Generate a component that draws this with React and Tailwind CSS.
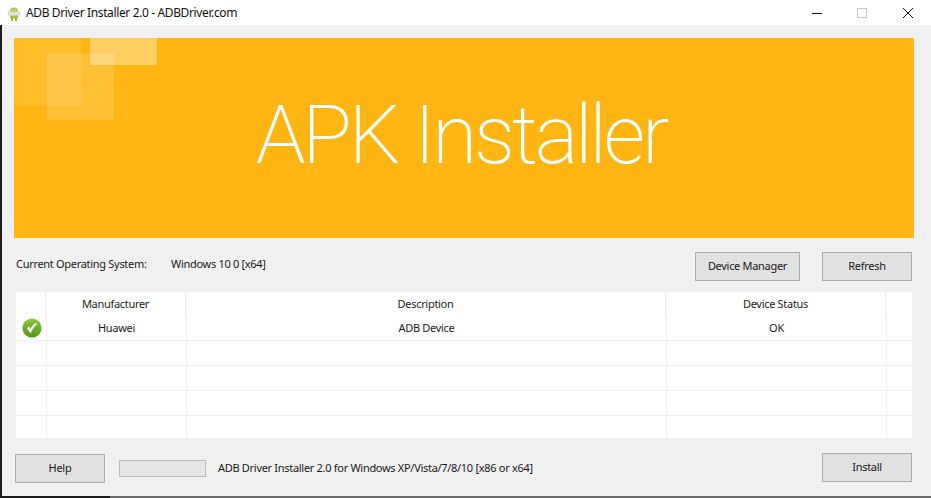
const ui = "font-['Noto_Sans','Open_Sans',sans-serif] text-[11px] tracking-[-0.3px] text-[#1a1a1a]";

function AndroidIcon() {
  return (
    <svg width="16" height="16" viewBox="0 0 16 16" className="shrink-0">
      <path d="M4 6.5a4 4 0 0 1 8 0z" fill="#a4c639" />
      <rect x="4" y="10.5" width="8" height="3" rx="1" fill="#a4c639" />
      <rect x="5" y="12.5" width="2" height="3.5" rx="1" fill="#8fae2f" />
      <rect x="9" y="12.5" width="2" height="3.5" rx="1" fill="#8fae2f" />
      <rect x="2" y="6.8" width="12" height="3.6" rx="1.6" fill="#e6e6dc" stroke="#b5b5a5" strokeWidth="0.5" />
      <circle cx="6.5" cy="4.6" r="0.6" fill="#fff" />
      <circle cx="9.5" cy="4.6" r="0.6" fill="#fff" />
    </svg>
  );
}

function CheckIcon() {
  return (
    <svg width="20" height="20" viewBox="0 0 20 20" className="translate-x-px">
      <defs>
        <linearGradient id="g" x1="0" y1="0" x2="0" y2="1">
          <stop offset="0" stopColor="#8cc63f" />
          <stop offset="1" stopColor="#4c9a12" />
        </linearGradient>
      </defs>
      <circle cx="10" cy="10" r="9.6" fill="url(#g)" />
      <path d="M4.8 10.2l3.8 5c1.6-3.8 3.6-6.4 6.6-9.2-.4-.5-1.4-.9-2.2-.8-2 1.6-3.3 3.4-4.5 5.6L7.2 8.4z" fill="#fff" />
    </svg>
  );
}

function Btn({ className, children }) {
  return (
    <div className={`flex h-[29px] items-center justify-center border border-[#adadad] bg-[#e1e1e1] ${className}`}>
      {children}
    </div>
  );
}

function Row({ cells, last }) {
  return (
    <div className={`grid grid-cols-[31px_140px_480px_220px_25px] items-center ${last ? "h-[22px]" : "h-[25px] border-b border-[#f0f0f0]"}`}>
      {cells.map((c, i) => (
        <div key={i} className={`flex h-full items-center justify-center ${i < 4 ? "border-r border-[#f0f0f0]" : ""}`}>
          {c}
        </div>
      ))}
    </div>
  );
}

export default function App() {
  return (
    <div className={`flex h-[498px] w-[931px] flex-col overflow-hidden bg-white ${ui}`}>
      <div className="flex h-[25px] shrink-0 items-center bg-white pl-[6px]">
        <AndroidIcon />
        <span className="ml-[4px] text-[12px] tracking-[-0.37px] text-[#111]">ADB Driver Installer 2.0 - ADBDriver.com</span>
        <div className="ml-auto flex items-center">
          <svg width="12" height="12" viewBox="0 0 12 12" className="mr-[33px]"><path d="M1 6.5h10" stroke="#111" strokeWidth="1" /></svg>
          <svg width="12" height="12" viewBox="0 0 12 12" className="mr-[34px]"><rect x="1.5" y="1.5" width="9" height="9" fill="none" stroke="#c8c8c8" /></svg>
          <svg width="12" height="12" viewBox="0 0 12 12" className="mr-[17px]"><path d="M1 1l10 10M11 1L1 11" stroke="#111" strokeWidth="1" /></svg>
        </div>
      </div>

      <div className="flex min-h-0 flex-1">
        <div className="w-[2px] shrink-0 bg-[#1c1c1c]" />
        <div className="min-w-0 flex-1 bg-[#f0f0f0] pt-[13px]">
          <div className="relative ml-[12px] flex h-[200px] w-[900px] items-center justify-center overflow-hidden bg-[#ffb612]">
            <div className="absolute left-0 top-0 h-[67px] w-[67px] bg-white/10" />
            <div className="absolute left-[33px] top-[15px] h-[67px] w-[67px] bg-white/15" />
            <div className="absolute left-[76px] top-0 h-[27px] w-[67px] bg-white/35" />
            <span className="-translate-x-[3px] -translate-y-[3px] font-['Roboto',sans-serif] text-[82px] font-extralight leading-none tracking-[-3.25px] text-white">APK Installer</span>
          </div>

          <div className="flex h-[54px] items-center pl-[14px] pr-[19px]">
            <span className="w-[155px] -translate-y-px">Current Operating System:</span>
            <span className="-translate-y-px">Windows 10 0 [x64]</span>
            <Btn className="ml-auto mr-[22px] w-[105px] translate-y-px">Device Manager</Btn>
            <Btn className="w-[90px] translate-y-px">Refresh</Btn>
          </div>

          <div className="ml-[14px] w-[896px] bg-white">
            <div className="grid h-[24px] grid-cols-[30px_140px_480px_220px_26px] items-center">
              {["", "Manufacturer", "Description", "Device Status", ""].map((t, i) => (
                <div key={i} className={`flex h-full items-center justify-center ${i < 4 ? "border-r border-[#ebebeb]" : ""}`}>{t}</div>
              ))}
            </div>
            <Row cells={[<CheckIcon />, "Huawei", "ADB Device", "OK", ""]} />
            <Row cells={["", "", "", "", ""]} />
            <Row cells={["", "", "", "", ""]} />
            <Row cells={["", "", "", "", ""]} />
            <Row last cells={["", "", "", "", ""]} />
          </div>

          <div className="mt-[15px] flex items-center pl-[13px] pr-[19px]">
            <Btn className="mr-[14px] w-[90px] translate-y-px">Help</Btn>
            <div className="mr-[12px] h-[17px] w-[87px] translate-y-px border border-[#bcbcbc] bg-[#e6e6e6]" />
            <span className="translate-y-px">ADB Driver Installer 2.0 for Windows XP/Vista/7/8/10 [x86 or x64]</span>
            <Btn className="ml-auto w-[90px]">Install</Btn>
          </div>
        </div>
      </div>
      <div className="flex h-[2px] shrink-0">
        <div className="w-[110px] bg-[#1c1c1c]" />
        <div className="flex-1 bg-[#6a6a6a]" />
      </div>
    </div>
  );
}
